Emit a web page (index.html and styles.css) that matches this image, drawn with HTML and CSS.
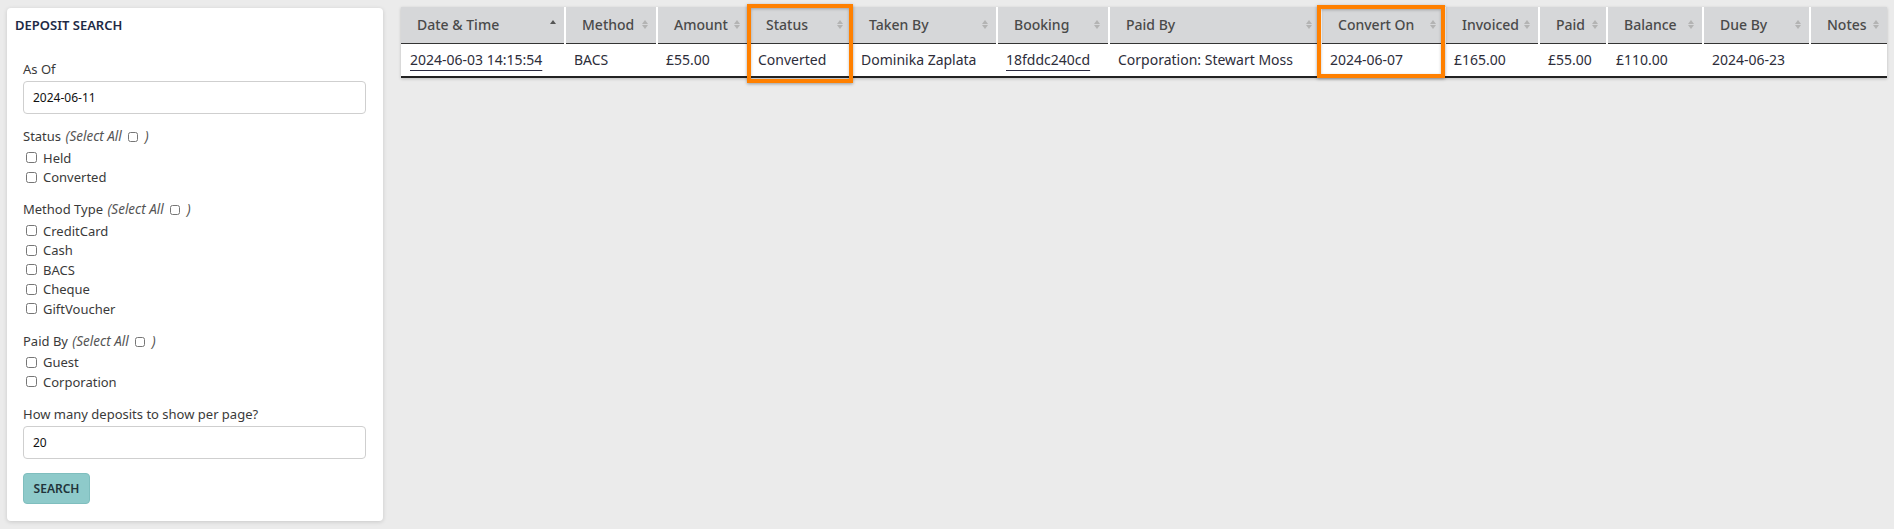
FILE: index.html
```html
<!DOCTYPE html>
<html lang="en">
<head>
    <meta charset="UTF-8">
    <title>Deposit Search</title>
    <link rel="stylesheet" href="styles.css">
</head>
<body>
<div class="page">
    <!--左侧搜索栏-->
    <div class="search_card">
        <h3 class="search_title">DEPOSIT SEARCH</h3>
        <form action="#" method="get" class="search_form">
            <div class="group">
                <label class="group_label" for="as_of">As Of</label>
                <input type="text" id="as_of" class="text_input" value="2024-06-11">
            </div>

            <div class="group">
                <div class="group_label">Status <i class="select_all">(Select All <input type="checkbox" class="cb_small"> )</i></div>
                <label class="cb_row"><input type="checkbox" class="cb"> Held</label>
                <label class="cb_row"><input type="checkbox" class="cb"> Converted</label>
            </div>

            <div class="group">
                <div class="group_label">Method Type <i class="select_all">(Select All <input type="checkbox" class="cb_small"> )</i></div>
                <label class="cb_row"><input type="checkbox" class="cb"> CreditCard</label>
                <label class="cb_row"><input type="checkbox" class="cb"> Cash</label>
                <label class="cb_row"><input type="checkbox" class="cb"> BACS</label>
                <label class="cb_row"><input type="checkbox" class="cb"> Cheque</label>
                <label class="cb_row"><input type="checkbox" class="cb"> GiftVoucher</label>
            </div>

            <div class="group">
                <div class="group_label">Paid By <i class="select_all">(Select All <input type="checkbox" class="cb_small"> )</i></div>
                <label class="cb_row"><input type="checkbox" class="cb"> Guest</label>
                <label class="cb_row"><input type="checkbox" class="cb"> Corporation</label>
            </div>

            <div class="group">
                <label class="group_label" for="per_page">How many deposits to show per page?</label>
                <input type="text" id="per_page" class="text_input" value="20">
            </div>

            <input type="submit" value="SEARCH" class="btn_search">
        </form>
    </div>

    <!--右侧结果表格-->
    <div class="result_wrap">
        <table class="result_table">
            <colgroup>
                <col style="width:164px"><col style="width:92px"><col style="width:92px"><col style="width:103px">
                <col style="width:145px"><col style="width:112px"><col style="width:212px"><col style="width:124px">
                <col style="width:94px"><col style="width:68px"><col style="width:96px"><col style="width:107px">
                <col style="width:77px">
            </colgroup>
            <thead>
            <tr>
                <th><div class="th_in">Date &amp; Time <span class="sort asc"></span></div></th>
                <th><div class="th_in">Method <span class="sort"></span></div></th>
                <th><div class="th_in">Amount <span class="sort"></span></div></th>
                <th><div class="th_in">Status <span class="sort"></span></div></th>
                <th><div class="th_in">Taken By <span class="sort"></span></div></th>
                <th><div class="th_in">Booking <span class="sort"></span></div></th>
                <th><div class="th_in">Paid By <span class="sort"></span></div></th>
                <th><div class="th_in">Convert On <span class="sort"></span></div></th>
                <th><div class="th_in">Invoiced <span class="sort"></span></div></th>
                <th><div class="th_in">Paid <span class="sort"></span></div></th>
                <th><div class="th_in">Balance <span class="sort"></span></div></th>
                <th><div class="th_in">Due By <span class="sort"></span></div></th>
                <th><div class="th_in">Notes <span class="sort"></span></div></th>
            </tr>
            </thead>
            <tbody>
            <tr>
                <td><a href="#">2024-06-03 14:15:54</a></td>
                <td>BACS</td>
                <td>£55.00</td>
                <td>Converted</td>
                <td>Dominika Zaplata</td>
                <td><a href="#">18fddc240cd</a></td>
                <td>Corporation: Stewart Moss</td>
                <td>2024-06-07</td>
                <td>£165.00</td>
                <td>£55.00</td>
                <td>£110.00</td>
                <td>2024-06-23</td>
                <td></td>
            </tr>
            </tbody>
        </table>
        <!--标注框-->
        <div class="mark mark_status"></div>
        <div class="mark mark_convert"></div>
    </div>
</div>
</body>
</html>
```

FILE: styles.css
```css
*{
    margin: 0px;
    padding: 0px;
    box-sizing: border-box;
}
body{
    background-color: #EBEBEB;
    font-family: "Noto Sans", "Open Sans", sans-serif;
    color: #333333;
}
.page{
    display: flex;
    align-items: flex-start;
    gap: 18px;
    padding: 7px;
}

/*左侧搜索栏*/
.search_card{
    width: 376px;
    margin-top: 1px;
    background-color: white;
    border-radius: 4px;
    box-shadow: 0 1px 4px rgba(0,0,0,0.15);
    padding-bottom: 17px;
}
.search_title{
    font-size: 13px;
    font-weight: 600;
    line-height: 20px;
    color: #1E2A45;
    padding: 7px 8px 0;
}
.search_form{
    padding: 24px 17px 0 16px;
}
.group{
    margin-bottom: 12px;
}
.group_label{
    display: block;
    font-size: 13px;
    line-height: 20px;
    color: #3A3A3A;
    margin-bottom: 2px;
}
.select_all{
    font-size: 13.5px;
    color: #555555;
    margin-left: 1px;
}
.cb_small{
    width: 10px;
    height: 10px;
    vertical-align: -1px;
    margin: 0 3px;
}
.cb_row{
    display: flex;
    align-items: center;
    font-size: 13px;
    height: 19.5px;
    color: #3A3A3A;
}
.cb{
    width: 11px;
    height: 11px;
    margin: 0 6px 0 3px;
}
.text_input{
    display: block;
    width: 343px;
    height: 33px;
    margin-top: 2px;
    border: 1px solid #CFCFCF;
    border-radius: 4px;
    padding-left: 9px;
    font-family: inherit;
    font-size: 12px;
    color: #111111;
}
.group:last-of-type{
    margin-bottom: 14px;
}
.btn_search{
    width: 67px;
    height: 31px;
    background-color: #8ECACA;
    border: 1px solid #7FBEBE;
    border-radius: 4px;
    font-family: inherit;
    font-size: 12px;
    font-weight: 600;
    color: #22343A;
}

/*右侧表格*/
.result_wrap{
    position: relative;
}
.result_table{
    width: 1486px;
    table-layout: fixed;
    border-collapse: collapse;
    background-color: white;
    box-shadow: 0 1px 3px rgba(0,0,0,0.2);
    border-bottom: 2px solid #222222;
}
.result_table th{
    height: 36px;
    background-color: #D6D7D9;
    border-left: 2px solid white;
    border-bottom: 1px solid #333333;
    font-size: 14px;
    font-weight: 500;
    color: #4A4A4A;
    text-align: left;
    padding: 0 8px 0 16px;
}
.result_table th:first-child{
    border-left: none;
}
.th_in{
    display: flex;
    align-items: center;
    justify-content: space-between;
    white-space: nowrap;
}
.sort{
    display: flex;
    flex-direction: column;
    gap: 1px;
}
.sort::before{
    content: "";
    border-left: 3.5px solid transparent;
    border-right: 3.5px solid transparent;
    border-bottom: 4px solid #B3B3B3;
}
.sort::after{
    content: "";
    border-left: 3.5px solid transparent;
    border-right: 3.5px solid transparent;
    border-top: 4px solid #B3B3B3;
}
.sort.asc::before{
    border-bottom-color: #555555;
}
.sort.asc::after{
    border-top-color: transparent;
}
.result_table td{
    height: 34px;
    font-size: 14px;
    color: #2D2D3A;
    padding-left: 9px;
    white-space: nowrap;
}
.result_table td a{
    color: #2D2D3A;
    text-decoration: underline;
    text-decoration-color: #2A2A40;
    text-underline-offset: 5px;
}

/*橙色标注框*/
.mark{
    position: absolute;
    border: 4px solid #FF8000;
    box-shadow: 0 1px 3px rgba(0,0,0,0.35), inset 0 1px 3px rgba(0,0,0,0.25);
}
.mark_status{
    left: 346px;
    top: -3px;
    width: 106px;
    height: 79px;
}
.mark_convert{
    left: 916px;
    top: -2px;
    width: 128px;
    height: 73px;
}
```
